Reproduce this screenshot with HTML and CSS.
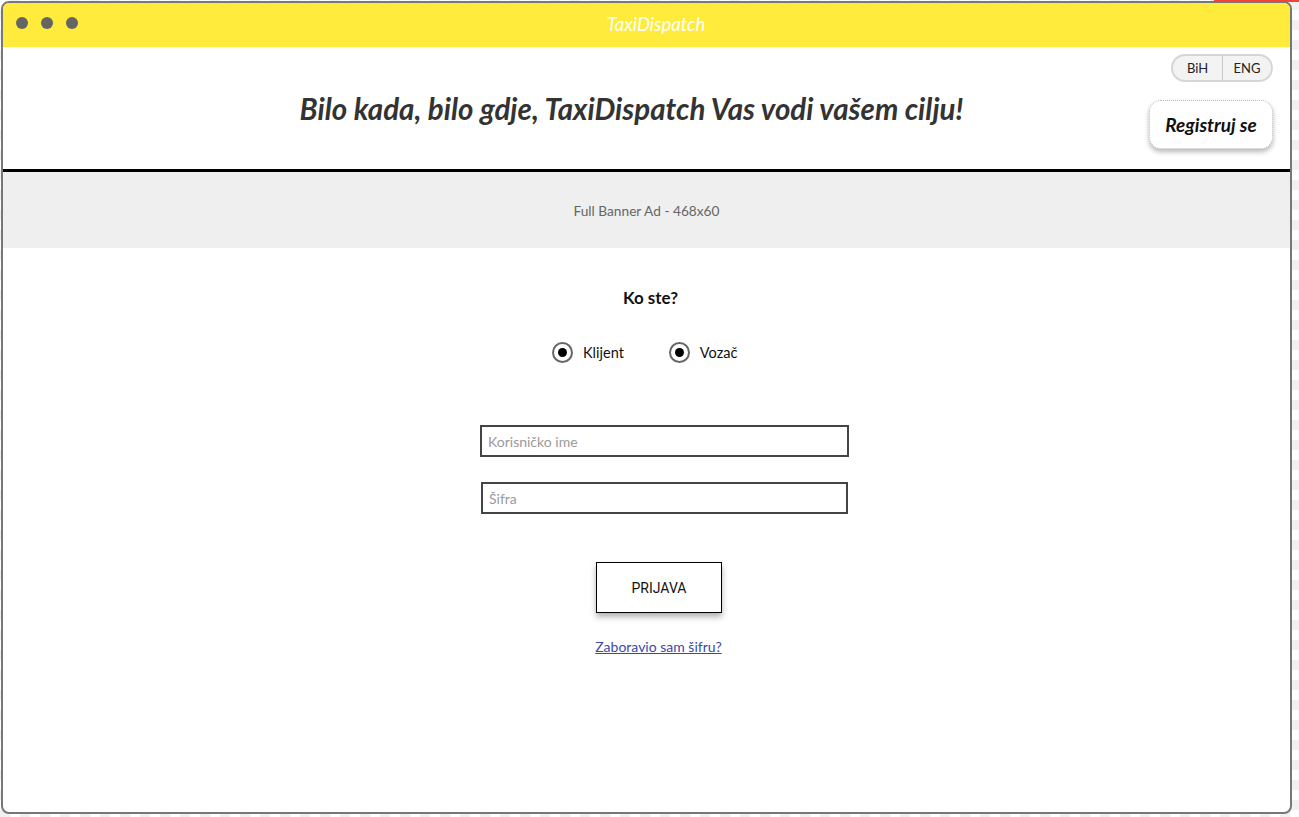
FILE: index.html
```html
<!DOCTYPE html>
<html lang="bs">
<head>
<meta charset="utf-8">
<title>TaxiDispatch</title>
<link rel="stylesheet" href="styles.css">
</head>
<body>
<div class="topmark"></div>
<div class="window">
  <div class="titlebar">
    <div class="dots"><span class="dot"></span><span class="dot"></span><span class="dot"></span></div>
    <div class="title">TaxiDispatch</div>
  </div>
  <header class="header">
    <h1 class="slogan">Bilo kada, bilo gdje, TaxiDispatch Vas vodi vašem cilju!</h1>
    <div class="header-side">
      <div class="lang">
        <span class="lang-item">BiH</span>
        <span class="lang-item">ENG</span>
      </div>
      <button class="register">Registruj se</button>
    </div>
  </header>
  <div class="banner">Full Banner Ad - 468x60</div>
  <main class="main">
    <div class="who">Ko ste?</div>
    <div class="roles">
      <label class="role"><span class="radio"></span>Klijent</label>
      <label class="role"><span class="radio"></span>Vozač</label>
    </div>
    <input class="field field-user" type="text" placeholder="Korisničko ime">
    <input class="field field-pass" type="password" placeholder="Šifra">
    <button class="login">PRIJAVA</button>
    <a class="forgot" href="#">Zaboravio sam šifru?</a>
  </main>
</div>
</body>
</html>
```
FILE: styles.css
```css
* { box-sizing: border-box; }
html, body { margin: 0; padding: 0; }
body {
  width: 1299px;
  height: 817px;
  overflow: hidden;
  position: relative;
  font-family: Lato, "Open Sans", sans-serif;
  background: #fff repeating-conic-gradient(#f0f0f0 0 25%, #ffffff 0 50%) 0 0 / 20px 20px;
}
.topmark {
  position: absolute;
  top: 0;
  left: 1214px;
  width: 85px;
  height: 2px;
  background: #f44336;
}
.window {
  margin: 1px 7px 0 1px;
  height: 813px;
  border: 2px solid #777;
  border-radius: 8px;
  background: #fff;
  overflow: hidden;
  display: flex;
  flex-direction: column;
}
.titlebar {
  height: 44px;
  flex: none;
  background: #ffeb3b;
  display: flex;
  align-items: center;
}
.dots {
  display: flex;
  gap: 13px;
  padding-left: 13px;
  margin-top: -4px;
}
.dot {
  width: 12px;
  height: 12px;
  border-radius: 50%;
  background: #656565;
}
.title {
  flex: 1;
  text-align: center;
  color: #fff;
  font-style: italic;
  font-size: 18.5px;
  margin-left: -56px;
  margin-top: -3px;
}
.header {
  height: 125px;
  flex: none;
  display: flex;
  padding-left: 119px;
  border-bottom: 3px solid #000;
}
.slogan {
  flex: 1;
  margin: 0 8px 0 0;
  padding-top: 43px;
  text-align: center;
  font-size: 29.5px;
  font-weight: 700;
  font-style: italic;
  color: #333;
  line-height: 38px;
}
.header-side {
  width: 124px;
  margin-right: 17px;
  padding-top: 7px;
  display: flex;
  flex-direction: column;
  align-items: flex-end;
  gap: 18px;
}
.lang {
  display: flex;
  height: 28px;
  border: 2px solid #d6d6d6;
  border-radius: 14px;
  background: #f3f3f3;
  overflow: hidden;
}
.lang-item {
  width: 49px;
  display: flex;
  align-items: center;
  justify-content: center;
  font-size: 13px;
  color: #222;
}
.lang-item + .lang-item { border-left: 1px solid #c8c8c8; }
.register {
  width: 124px;
  height: 49px;
  border: 1px dotted #bbb;
  border-radius: 12px;
  background: #fff;
  box-shadow: 0 3px 5px rgba(0,0,0,0.28);
  font-family: inherit;
  font-size: 19px;
  font-weight: 700;
  font-style: italic;
  color: #111;
  padding: 0;
}
.banner {
  height: 76px;
  flex: none;
  background: #efefef;
  display: flex;
  align-items: center;
  justify-content: center;
  font-size: 13.7px;
  color: #666;
  padding-top: 1px;
}
.main {
  flex: 1;
  display: flex;
  flex-direction: column;
  align-items: flex-start;
  padding-top: 40px;
}
.who {
  width: 100%;
  text-align: center;
  padding-left: 8px;
  font-size: 17px;
  font-weight: 700;
  line-height: 20px;
  color: #111;
}
.roles {
  margin-top: 33px;
  margin-left: 549px;
  display: flex;
  gap: 45px;
  height: 22px;
}
.role {
  display: flex;
  align-items: center;
  gap: 10px;
  font-size: 14.5px;
  color: #111;
}
.radio {
  width: 21px;
  height: 21px;
  border-radius: 50%;
  border: 2px solid #666;
  display: flex;
  align-items: center;
  justify-content: center;
  background: #fff;
}
.radio::after {
  content: "";
  width: 9px;
  height: 9px;
  border-radius: 50%;
  background: #000;
}
.field {
  display: block;
  height: 32px;
  border: 2px solid #444;
  padding: 0 6px;
  font-family: inherit;
  font-size: 14px;
  color: #333;
  background: #fff;
  outline: none;
}
.field::placeholder { color: #9a9a9a; }
.field-user {
  margin-top: 62px;
  margin-left: 477px;
  width: 369px;
}
.field-pass {
  margin-top: 25px;
  margin-left: 478px;
  width: 367px;
}
.login {
  margin-top: 48px;
  margin-left: 593px;
  width: 126px;
  height: 51px;
  border: 1px solid #000;
  background: #fff;
  box-shadow: 0 4px 6px rgba(0,0,0,0.3);
  font-family: Roboto, sans-serif;
  font-size: 14px;
  color: #111;
  padding: 0;
}
.forgot {
  align-self: stretch;
  margin-top: 25px;
  text-align: center;
  padding-left: 24px;
  font-size: 14px;
  line-height: 18px;
  color: #3949ab;
  text-decoration: underline;
}
```
